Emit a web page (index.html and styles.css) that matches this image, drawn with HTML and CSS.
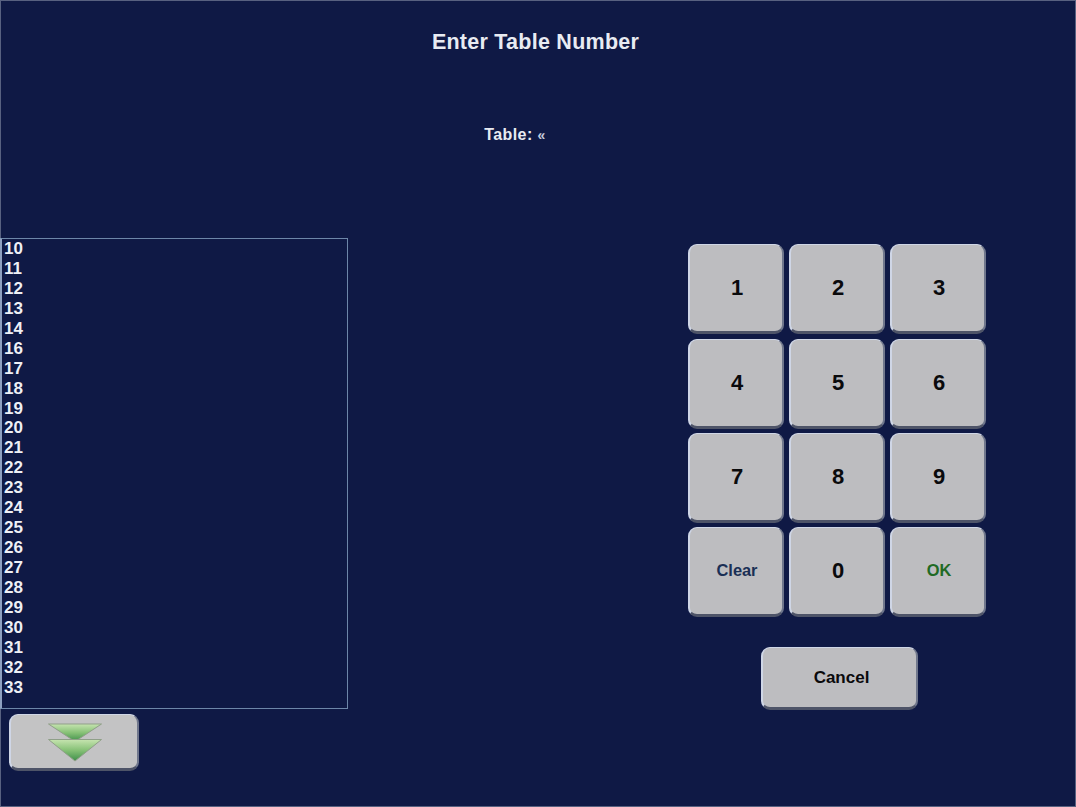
FILE: index.html
```html
<!DOCTYPE html>
<html lang="en">
<head>
<meta charset="utf-8">
<title>Enter Table Number</title>
<link rel="stylesheet" href="styles.css">
</head>
<body>
<div class="page">
  <header class="header">
    <h1 class="title">Enter Table Number</h1>
    <p class="entry">Table: <span class="caret">«</span></p>
  </header>
  <main class="main">
    <section class="left">
      <ul class="list">
        <li>10</li><li>11</li><li>12</li><li>13</li><li>14</li><li>16</li><li>17</li><li>18</li><li>19</li><li>20</li><li>21</li><li>22</li><li>23</li><li>24</li><li>25</li><li>26</li><li>27</li><li>28</li><li>29</li><li>30</li><li>31</li><li>32</li><li>33</li>
      </ul>
      <button class="btn scroll" aria-label="Scroll down">
        <svg class="arrows" width="56" height="39" viewBox="0 0 56 39">
          <defs>
            <linearGradient id="g" x1="0" y1="0" x2="0" y2="1">
              <stop offset="0" stop-color="#c6e4b0"/>
              <stop offset="0.5" stop-color="#86c176"/>
              <stop offset="1" stop-color="#3f8f4a"/>
            </linearGradient>
          </defs>
          <path class="arrow" d="M1.5 1H54.5L28 18.5Z" fill="url(#g)"/>
          <path class="arrow" d="M1.5 16.5H54.5L28 38Z" fill="url(#g)"/>
        </svg>
      </button>
    </section>
    <section class="right">
      <div class="keypad">
        <button class="btn key">1</button>
        <button class="btn key">2</button>
        <button class="btn key">3</button>
        <button class="btn key">4</button>
        <button class="btn key">5</button>
        <button class="btn key">6</button>
        <button class="btn key">7</button>
        <button class="btn key">8</button>
        <button class="btn key">9</button>
        <button class="btn key small clear">Clear</button>
        <button class="btn key">0</button>
        <button class="btn key small ok">OK</button>
      </div>
      <button class="btn cancel">Cancel</button>
    </section>
  </main>
</div>
</body>
</html>
```

FILE: styles.css
```css
* { box-sizing: border-box; }
html, body { margin: 0; padding: 0; }
body {
  background: #0f1945;
  font-family: "Liberation Sans", Arial, sans-serif;
  overflow: hidden;
}
.page {
  width: 1076px;
  height: 807px;
  box-shadow: inset 0 0 0 1px #586180;
}
.header {
  height: 238px;
  padding: 29px 5px 0 0;
  text-align: center;
  color: #e8ebf2;
}
.title {
  margin: 0;
  font-size: 21.5px;
  line-height: 26px;
  font-weight: bold;
  letter-spacing: 0.25px;
}
.entry {
  margin: 69px 0 0;
  padding-right: 41px;
  font-size: 16px;
  line-height: 22px;
  font-weight: bold;
  letter-spacing: 0.4px;
}
.caret { font-size: 14px; color: #c5cbdc; }
.main {
  display: flex;
  align-items: flex-start;
}
.left { width: 348px; flex: none; }
.list {
  list-style: none;
  margin: 0;
  padding: 0 0 11px 2px;
  height: 471px;
  border: 1px solid #6d86a8;
  border-left: 2px solid #8ea0c0;
  color: #eef0f6;
  font-size: 17px;
  font-weight: bold;
}
.list li { height: 19.95px; line-height: 19.95px; }
.btn {
  display: block;
  margin: 0;
  padding: 0 0 0 2px;
  background: #bdbdc0;
  border: 1px solid #cfd6e6;
  border-left-width: 2px;
  border-bottom: 3px solid #4e5468;
  border-right: 2px solid #70778c;
  border-radius: 9px;
  font-family: inherit;
  font-weight: bold;
  color: #0a0a0c;
}
.scroll {
  width: 130px;
  height: 57px;
  margin: 5px 0 0 9px;
  display: flex;
  align-items: center;
  justify-content: center;
  background: #c3c3c4;
}
.arrows { display: block; margin-top: 1px; }
.arrow { stroke: #8f9f88; stroke-width: 1; stroke-linejoin: round; }
.right {
  margin-left: 340px;
  padding-top: 6.4px;
}
.keypad {
  display: grid;
  grid-template-columns: repeat(3, 96px);
  grid-auto-rows: 90px;
  column-gap: 5px;
  row-gap: 4.3px;
}
.key { font-size: 22px; }
.key.small { font-size: 16.4px; padding-bottom: 2px; }
.clear { color: #1a2f55; }
.ok { color: #1f6a24; }
.cancel {
  width: 157px;
  height: 63px;
  margin: 29.7px 0 0 73px;
  padding: 2px 0 0 4px;
  font-size: 17px;
}
```
